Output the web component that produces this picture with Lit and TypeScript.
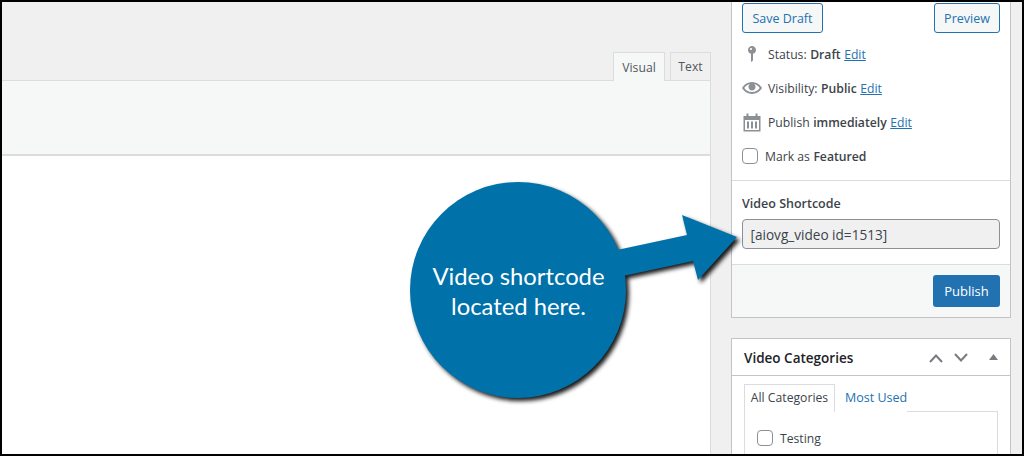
import { LitElement, html, css, svg } from "lit";
import { customElement } from "lit/decorators.js";

const pin = svg`<path d="M14 6c0 1.86-1.28 3.41-3 3.86V16c0 1-2 2-2 2V9.86c-1.72-.45-3-2-3-3.86 0-2.21 1.79-4 4-4s4 1.79 4 4zM8 5c0 .55.45 1 1 1s1-.45 1-1-.45-1-1-1-1 .45-1 1z"/>`;
const eye = svg`<path d="M19.7 9.4C17.7 6 14 3.9 10 3.9S2.3 6 .3 9.4L0 10l.3.6c2 3.4 5.7 5.5 9.7 5.5s7.7-2.1 9.7-5.5l.3-.6-.3-.6zM10 14.1c-3.1 0-6-1.6-7.7-4.1C3.6 8 5.7 6.6 8 6.1c-.9.6-1.5 1.7-1.5 2.9 0 1.9 1.6 3.5 3.5 3.5s3.5-1.6 3.5-3.5c0-1.2-.6-2.3-1.5-2.9 2.3.5 4.4 1.9 5.7 3.9-1.7 2.5-4.6 4.1-7.7 4.1z"/>`;
const cal = svg`<path fill-rule="evenodd" d="M4.5 1.5h2v2.5h7V1.5h2V4H18.5v15.5H1.5V4h3zM3 8v10h14V8z"/><path d="M5 9.5h2v7H5zM9 9.5h2v7H9zM13 9.5h2v7h-2z"/>`;

@customElement("app-root")
export class AppRoot extends LitElement {
  static styles = css`
    :host { display: block; width: 1024px; height: 456px; font-family: "Open Sans", "Noto Sans", sans-serif; font-size: 12.2px; color: #3c434a; }
    * { box-sizing: border-box; }
    .frame { position: relative; width: 1024px; height: 456px; border: 2px solid #000; background: #f0f0f1; display: flex; overflow: hidden; }
    .editor { width: 709px; flex: none; display: flex; flex-direction: column; padding-top: 50px; }
    .tabs { display: flex; justify-content: flex-end; gap: 5px; height: 29px; position: relative; z-index: 1; }
    .tab { height: 28px; border: 1px solid #dcdcde; background: #f0f0f1; display: flex; align-items: center; justify-content: center; color: #50575e; font-size: 12.2px; }
    .tab.text { width: 41px; border-bottom: none; }
    .tab.visual { width: 52px; height: 29px; background: #f6f7f7; border-bottom: none; }
    .toolbar { height: 76px; margin-top: -1px; background: #f6f7f7; border: 1px solid #dcdcde; border-left: none; border-bottom: 2px solid #dcdcde; }
    .body { flex: 1; background: #fff; border-right: 1px solid #dcdcde; }
    .side { width: 280px; margin-left: 20px; flex: none; display: flex; flex-direction: column; gap: 20px; }
    .box { background: #fff; border: 1px solid #c3c4c7; }
    .box.pub { border-top: none; }
    .actions { display: flex; justify-content: space-between; padding: 1px 10px 0; }
    .btn { height: 30px; border: 1px solid #2271b1; border-radius: 3px; background: #f6f7f7; color: #2271b1; display: flex; align-items: center; justify-content: center; font-size: 12.5px; }
    .btn.save { width: 81px; }
    .btn.prev { width: 66px; }
    .rows { display: flex; flex-direction: column; padding: 4px 10px 0; height: 148px; border-bottom: 1px solid #dcdcde; }
    .row { height: 34px; display: flex; align-items: center; }
    .ic { width: 26px; flex: none; display: flex; }
    .ic svg { width: 20px; height: 20px; fill: #8c8f94; }
    .row b { font-weight: 600; margin-left: 3.5px; margin-right: 3.5px; color: #3c434a; }
    a { color: #2271b1; text-decoration: underline; }
    .cb { width: 16px; height: 16px; border: 1px solid #8c8f94; border-radius: 4px; background: #fff; flex: none; }
    .check .cb { margin-right: 7px; }
    .short { padding: 14px 10px 15px; border-bottom: 1px solid #dcdcde; height: 84px; }
    .short label { display: block; font-weight: 600; font-size: 12.5px; height: 24px; line-height: 18px; color: #3c434a; }
    .input { height: 30px; border: 1px solid #8c8f94; border-radius: 4px; background: #f0f0f1; padding: 0 7.5px; display: flex; align-items: center; color: #3c434a; font-size: 13.6px; }
    .foot { background: #f6f7f7; height: 52px; padding: 10px 10px 0; display: flex; justify-content: flex-end; align-items: flex-start; }
    .publish { width: 67px; height: 32px; border-radius: 3px; background: #2271b1; color: #fff; display: flex; align-items: center; justify-content: center; font-size: 13px; }
    .cat { flex: 1; border-bottom: none; padding: 0; }
    .head { height: 37px; border-bottom: 1px solid #c3c4c7; display: flex; align-items: center; padding: 0 12px; }
    .head h2 { margin: 0; padding-top: 2px; font-size: 13.5px; font-weight: 600; color: #1d2327; flex: 1; }
    .ctl { display: flex; align-items: center; gap: 11px; padding-top: 1px; }
    .ctl svg { display: block; }
    .ctl .tri { margin-left: 10px; margin-top: -2px; }
    .cattabs { display: flex; padding: 8px 0 0 12px; align-items: stretch; height: 36px; }
    .ct { height: 28px; padding-bottom: 2px; border: 1px solid #dcdcde; border-bottom: none; background: #fff; display: flex; align-items: center; justify-content: center; position: relative; z-index: 1; font-size: 12.2px; width: 91px; white-space: nowrap; flex: none; }
    .ct.off { border: none; color: #2271b1; width: auto; padding-left: 10px; font-size: 12.5px; }
    .panel { margin: -1px 12px 0; border: 1px solid #dcdcde; height: 60px; padding: 18px 12px 0; display: flex; align-items: flex-start; gap: 7px; }
    .callout { position: absolute; left: 403px; top: 176px; width: 345px; height: 230px; }
    .callout svg { position: absolute; left: 0; top: 0; overflow: visible; filter: drop-shadow(3px 3px 2px rgba(0,0,0,.9)); }
    .say { position: absolute; left: 5px; top: 83px; width: 217px; text-align: center; color: #fff; font-family: "Lato", "Open Sans", sans-serif; font-size: 23.8px; line-height: 30px; }
  `;

  render() {
    return html`
      <div class="frame">
        <div class="editor">
          <div class="tabs"><div class="tab visual">Visual</div><div class="tab text">Text</div></div>
          <div class="toolbar"></div>
          <div class="body"></div>
        </div>
        <div class="side">
          <div class="box pub">
            <div class="actions"><div class="btn save">Save Draft</div><div class="btn prev">Preview</div></div>
            <div class="rows">
              <div class="row"><span class="ic"><svg viewBox="0 0 20 20">${pin}</svg></span>Status:<b>Draft</b><a>Edit</a></div>
              <div class="row"><span class="ic"><svg viewBox="0 0 20 20">${eye}</svg></span>Visibility:<b>Public</b><a>Edit</a></div>
              <div class="row"><span class="ic"><svg viewBox="0 0 20 20">${cal}</svg></span>Publish<b>immediately</b><a>Edit</a></div>
              <div class="row check"><span class="cb"></span>Mark as<b>Featured</b></div>
            </div>
            <div class="short">
              <label>Video Shortcode</label>
              <div class="input">[aiovg_video id=1513]</div>
            </div>
            <div class="foot"><div class="publish">Publish</div></div>
          </div>
          <div class="box cat">
            <div class="head">
              <h2>Video Categories</h2>
              <div class="ctl">
                <svg width="14" height="10" viewBox="0 0 14 10"><polyline points="1,9 7,2.5 13,9" fill="none" stroke="#787c82" stroke-width="2"/></svg>
                <svg width="14" height="10" viewBox="0 0 14 10"><polyline points="1,1 7,7.5 13,1" fill="none" stroke="#787c82" stroke-width="2"/></svg>
                <svg class="tri" width="9" height="6" viewBox="0 0 9 6"><polygon points="4.5,0 9,6 0,6" fill="#787c82"/></svg>
              </div>
            </div>
            <div class="cattabs"><div class="ct">All Categories</div><div class="ct off">Most Used</div></div>
            <div class="panel"><span class="cb"></span>Testing</div>
          </div>
        </div>
        <div class="callout">
          <svg width="345" height="230" viewBox="0 0 345 230">
            <circle cx="113" cy="112" r="108" fill="#0071a9"/>
            <polygon points="212,72 282,57 277,37 332,59 293,102 288,83 218,98 190,100" fill="#0071a9"/>
          </svg>
          <div class="say">Video shortcode<br>located here.</div>
        </div>
      </div>
    `;
  }
}
